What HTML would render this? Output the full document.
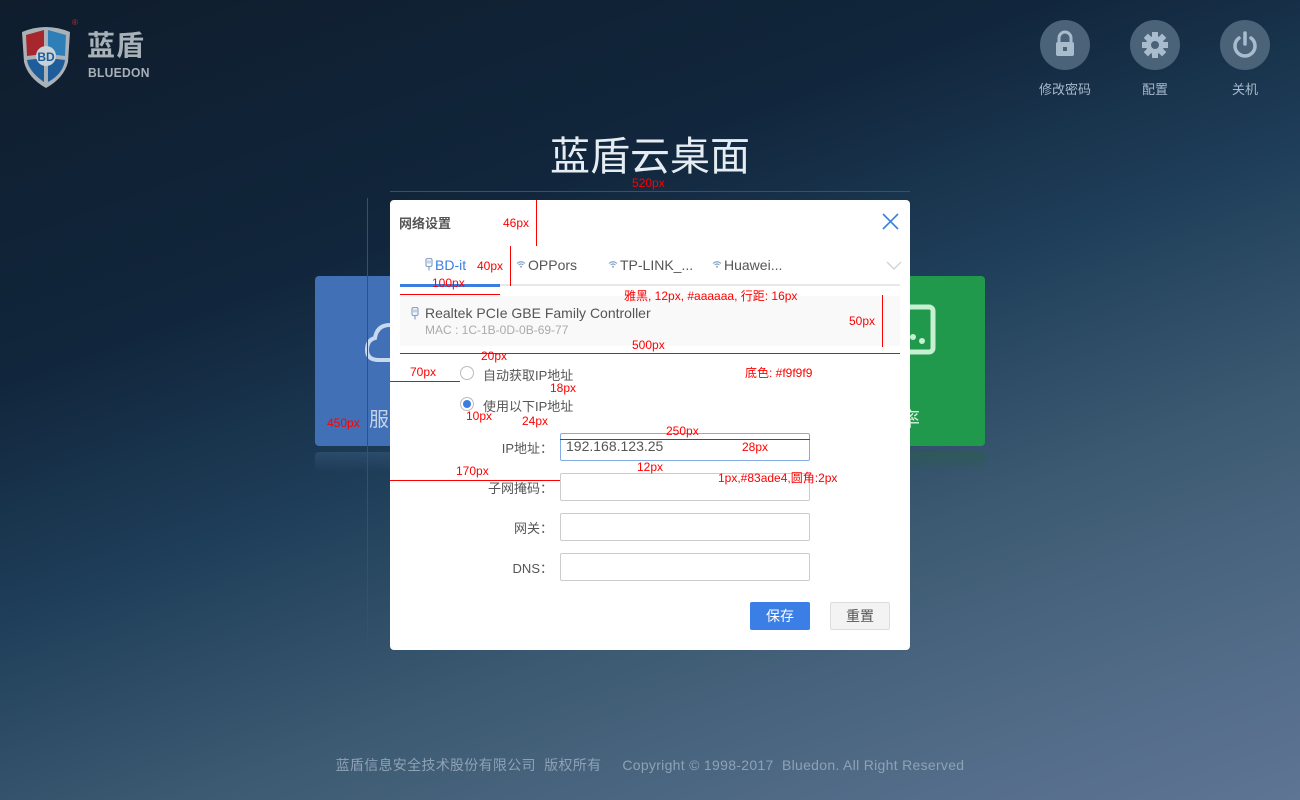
<!DOCTYPE html>
<html><head><meta charset="utf-8">
<style>
*{margin:0;padding:0;box-sizing:border-box}
body{width:1300px;height:800px;overflow:hidden;position:relative;font-family:"Liberation Sans","Noto Sans CJK SC",sans-serif;
background:linear-gradient(160deg,#0f1d2d 0%,#11263c 30%,#1e3d58 48%,#3c5a72 68%,#506a86 85%,#5e7594 100%);}
.a{position:absolute}
.r{color:#f00;font-size:12px;position:absolute;white-space:nowrap;font-family:"Liberation Sans","Noto Sans CJK SC",sans-serif}
.hl{position:absolute;height:1px;background:#f00}
.vl{position:absolute;width:1px;background:#f00}
.circ{position:absolute;width:50px;height:50px;border-radius:50%;background:#4b6378;top:20px}
.tl{position:absolute;top:79px;font-size:13px;color:#a8bacb;width:90px;text-align:center}
.tab{position:absolute;top:257px;font-size:14px;color:#555;white-space:nowrap}
.tab svg{vertical-align:middle;margin-right:2px;position:relative;top:-2px}
.lbl{position:absolute;font-size:13px;color:#555;text-align:right;width:100px;left:453px}
.inp{position:absolute;left:560px;width:250px;height:28px;border:1px solid #ccc;border-radius:2px;background:#fff}
</style></head><body>
<svg width="0" height="0" style="position:absolute"><defs>
<symbol id="wf" viewBox="0 0 10 8"><path d="M1 3.5 Q5 0 9 3.5 M2.6 5 Q5 3 7.4 5" fill="none" stroke="#8aa4c8" stroke-width="1.1"/><circle cx="5" cy="6.8" r="1" fill="#8aa4c8"/></symbol>
<symbol id="pl" viewBox="0 0 8 13"><rect x="1" y="0.5" width="6" height="8" rx="1.5" fill="none" stroke="#8aa4c8" stroke-width="1.2"/><line x1="3" y1="2.5" x2="3" y2="5.5" stroke="#8aa4c8"/><line x1="5" y1="2.5" x2="5" y2="5.5" stroke="#8aa4c8"/><line x1="4" y1="8.5" x2="4" y2="12.5" stroke="#8aa4c8" stroke-width="1.2"/></symbol>
</defs></svg>
<!-- logo -->
<svg class="a" style="left:20px;top:24px" width="52" height="66" viewBox="0 0 52 66">
<path d="M2 8 Q26 -2 50 8 L48 38 Q44 54 26 64 Q8 54 4 38Z" fill="#aab2b8"/>
<path d="M6 11 L24 6 L24 30 L7 32Z" fill="#a6272d"/>
<path d="M28 6 L46 11 L45 32 L28 30Z" fill="#2e7fb8"/>
<path d="M7 36 L24 34 L24 58 Q12 50 8 40Z" fill="#1e5d9a"/>
<path d="M28 34 L45 36 Q43 50 28 58Z" fill="#1e5d9a"/>
<circle cx="26" cy="32" r="10" fill="#c9d2d8"/>
<text x="26" y="37" font-size="12" font-weight="bold" text-anchor="middle" fill="#1e5d9a" font-family="Liberation Sans">BD</text>
</svg>
<div class="a" style="left:72px;top:18px;font-size:8px;color:#a33">®</div>
<div class="a" style="left:87px;top:30px;font-size:28px;font-weight:bold;color:#a8b0b8;letter-spacing:1px;line-height:32px">蓝盾</div>
<div class="a" style="left:88px;top:65px;font-size:13px;font-weight:bold;color:#a8b0b8;letter-spacing:0.3px;transform:scaleX(0.93);transform-origin:left">BLUEDON</div>

<!-- top right -->
<div class="circ" style="left:1040px"><svg width="50" height="50"><rect x="16" y="22" width="18" height="14" rx="2" fill="#a8bccd"/><path d="M19 23 V18 a6 6 0 0 1 12 0 V23" fill="none" stroke="#a8bccd" stroke-width="3"/><rect x="23" y="27" width="4" height="4" fill="#4b6378"/></svg></div>
<div class="circ" style="left:1130px"><svg width="50" height="50"><g transform="translate(25 25)" fill="#a8bccd"><circle r="9"/><g id="t"><rect x="-3" y="-13" width="6" height="6"/></g><use href="#t" transform="rotate(45)"/><use href="#t" transform="rotate(90)"/><use href="#t" transform="rotate(135)"/><use href="#t" transform="rotate(180)"/><use href="#t" transform="rotate(225)"/><use href="#t" transform="rotate(270)"/><use href="#t" transform="rotate(315)"/><circle r="4" fill="#4b6378"/></g></svg></div>
<div class="circ" style="left:1220px"><svg width="50" height="50"><path d="M19 18 A10 10 0 1 0 31 18" fill="none" stroke="#a8bccd" stroke-width="3.5" stroke-linecap="round"/><line x1="25" y1="13" x2="25" y2="24" stroke="#a8bccd" stroke-width="3.5" stroke-linecap="round"/></svg></div>
<div class="tl" style="left:1020px">修改密码</div>
<div class="tl" style="left:1110px">配置</div>
<div class="tl" style="left:1200px">关机</div>

<div class="a" style="left:0;width:1300px;top:132px;text-align:center;font-size:40px;color:#e6edf2;line-height:50px">蓝盾云桌面</div>

<!-- cards -->
<div class="a" style="left:315px;top:276px;width:100px;height:170px;background:#4170b6;border-radius:4px"></div>
<svg class="a" style="left:365px;top:320px" width="30" height="50"><path d="M25 5 Q12 5 10 18 Q2 20 2 30 Q2 40 14 40 L30 40" fill="none" stroke="#c7d8ef" stroke-width="4"/></svg>
<div class="a" style="left:369px;top:403px;font-size:20px;color:#c4d3ea">服</div>
<div class="a" style="left:315px;top:452px;width:100px;height:20px;background:linear-gradient(#2c4c6c,rgba(40,70,100,0));border-radius:4px"></div>
<div class="a" style="left:885px;top:276px;width:100px;height:170px;background:#21994c;border-radius:4px"></div>
<svg class="a" style="left:900px;top:300px" width="40" height="60"><rect x="-10" y="7" width="43" height="45" rx="4" fill="none" stroke="#c5f0d2" stroke-width="5"/><circle cx="13" cy="37" r="3" fill="#c5f0d2"/><circle cx="22" cy="41" r="3" fill="#c5f0d2"/></svg>
<div class="a" style="left:900px;top:403px;font-size:20px;color:#d6efdf">率</div>
<div class="a" style="left:885px;top:452px;width:100px;height:20px;background:linear-gradient(#2e5a58,rgba(40,80,80,0));border-radius:4px"></div>

<!-- modal -->
<div class="a" style="left:390px;top:200px;width:520px;height:450px;background:#fff;border-radius:4px"></div>
<div class="a" style="left:399px;top:213px;font-size:13px;font-weight:bold;color:#555">网络设置</div>
<svg class="a" style="left:882px;top:213px" width="17" height="17"><path d="M1 1 L16 16 M16 1 L1 16" stroke="#3b7de0" stroke-width="1.6"/></svg>
<div class="tab" style="left:425px;color:#3b7de0"><svg width="8" height="13"><use href="#pl"/></svg>BD-it</div>
<div class="tab" style="left:516px"><svg width="10" height="8"><use href="#wf"/></svg>OPPors</div>
<div class="tab" style="left:608px"><svg width="10" height="8"><use href="#wf"/></svg>TP-LINK_...</div>
<div class="tab" style="left:712px"><svg width="10" height="8"><use href="#wf"/></svg>Huawei...</div>
<svg class="a" style="left:886px;top:261px" width="16" height="9"><path d="M1 1 L8 8 L15 1" fill="none" stroke="#ccc" stroke-width="1.2"/></svg>
<div class="a" style="left:400px;top:284px;width:500px;height:2px;background:#e8e8e8"></div>
<div class="a" style="left:400px;top:284px;width:100px;height:3px;background:#3b7de0"></div>
<div class="a" style="left:400px;top:296px;width:500px;height:50px;background:#f9f9f9"></div>
<svg class="a" style="left:411px;top:307px" width="8" height="13"><use href="#pl"/></svg>
<div class="a" style="left:425px;top:305px;font-size:14px;color:#555">Realtek PCIe GBE Family Controller</div>
<div class="a" style="left:425px;top:323px;font-size:12px;color:#aaa">MAC : 1C-1B-0D-0B-69-77</div>

<div class="a" style="left:460px;top:366px;width:14px;height:14px;border:1px solid #bbb;border-radius:50%"></div>
<div class="a" style="left:483px;top:365px;font-size:13px;color:#555">自动获取IP地址</div>
<div class="a" style="left:460px;top:397px;width:14px;height:14px;border:1px solid #bbb;border-radius:50%"><div style="margin:2px;width:8px;height:8px;border-radius:50%;background:#3b7de0"></div></div>
<div class="a" style="left:483px;top:396px;font-size:13px;color:#555">使用以下IP地址</div>

<div class="lbl" style="top:438px">IP地址：</div>
<div class="inp" style="top:433px;border-color:#83ade4;font-size:14px;color:#555;padding:4px 5px">192.168.123.25</div>
<div class="lbl" style="top:478px">子网掩码：</div>
<div class="inp" style="top:473px"></div>
<div class="lbl" style="top:518px">网关：</div>
<div class="inp" style="top:513px"></div>
<div class="lbl" style="top:558px">DNS：</div>
<div class="inp" style="top:553px"></div>
<div class="a" style="left:750px;top:602px;width:60px;height:28px;background:#3b7ee6;border-radius:2px;color:#fff;font-size:14px;text-align:center;line-height:28px">保存</div>
<div class="a" style="left:830px;top:602px;width:60px;height:28px;background:#f3f3f3;border:1px solid #ddd;border-radius:2px;color:#555;font-size:14px;text-align:center;line-height:26px">重置</div>

<!-- annotations -->
<div class="hl" style="left:390px;top:191px;width:520px"></div>
<div class="r" style="left:632px;top:176px">520px</div>
<div class="vl" style="left:367px;top:198px;height:452px"></div>
<div class="r" style="left:327px;top:416px">450px</div>
<div class="vl" style="left:536px;top:200px;height:46px"></div>
<div class="r" style="left:503px;top:216px">46px</div>
<div class="vl" style="left:510px;top:246px;height:40px"></div>
<div class="r" style="left:477px;top:259px">40px</div>
<div class="hl" style="left:400px;top:294px;width:100px"></div>
<div class="r" style="left:432px;top:276px">100px</div>
<div class="r" style="left:624px;top:287px">雅黑, 12px, #aaaaaa, 行距: 16px</div>
<div class="vl" style="left:882px;top:295px;height:52px"></div>
<div class="r" style="left:849px;top:314px">50px</div>
<div class="hl" style="left:400px;top:353px;width:500px"></div>
<div class="r" style="left:632px;top:338px">500px</div>
<div class="r" style="left:745px;top:364px">底色: #f9f9f9</div>
<div class="r" style="left:481px;top:349px">20px</div>
<div class="hl" style="left:390px;top:381px;width:70px"></div>
<div class="r" style="left:410px;top:365px">70px</div>
<div class="r" style="left:550px;top:381px">18px</div>
<div class="r" style="left:466px;top:409px">10px</div>
<div class="r" style="left:522px;top:414px">24px</div>
<div class="hl" style="left:560px;top:439px;width:250px"></div>
<div class="r" style="left:666px;top:424px">250px</div>
<div class="r" style="left:742px;top:440px">28px</div>
<div class="r" style="left:637px;top:460px">12px</div>
<div class="r" style="left:718px;top:469px">1px,#83ade4,圆角:2px</div>
<div class="hl" style="left:390px;top:480px;width:170px"></div>
<div class="r" style="left:456px;top:464px">170px</div>

<div class="a" style="left:0;width:1300px;top:755px;text-align:center;font-size:14px;color:#8ea2b6;letter-spacing:0.3px">蓝盾信息安全技术股份有限公司&nbsp; 版权所有 &nbsp;&nbsp;&nbsp; Copyright © 1998-2017&nbsp; Bluedon. All Right Reserved</div>
</body></html>
